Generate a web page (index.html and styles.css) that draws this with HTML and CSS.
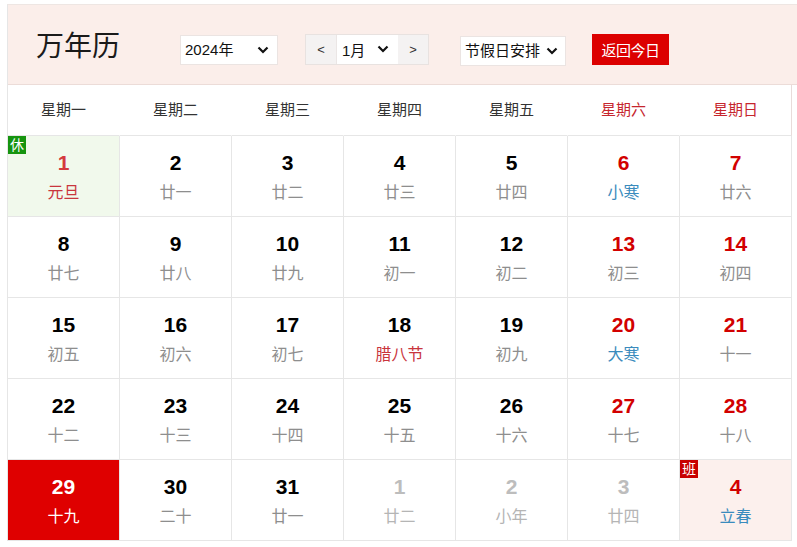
FILE: index.html
```html
<!DOCTYPE html>
<html lang="zh-CN">
<head>
<meta charset="utf-8">
<title>万年历</title>
<link rel="stylesheet" href="styles.css">
</head>
<body>
<div class="wrap">
  <div class="head">
    <h1 class="title">万年历</h1>
    <div class="controls">
      <div class="sel year"><span>2024年</span><svg class="chev" width="12" height="8" viewBox="0 0 12 8"><polyline points="1.5,1.5 6,6 10.5,1.5" fill="none" stroke="#111" stroke-width="2.2"/></svg></div>
      <div class="mgroup">
        <span class="arrow">&lt;</span>
        <div class="msel"><span>1月</span><svg class="chev" width="12" height="8" viewBox="0 0 12 8"><polyline points="1.5,1.5 6,6 10.5,1.5" fill="none" stroke="#111" stroke-width="2.2"/></svg></div>
        <span class="arrow">&gt;</span>
      </div>
      <div class="sel hol"><span>节假日安排</span><svg class="chev" width="12" height="8" viewBox="0 0 12 8"><polyline points="1.5,1.5 6,6 10.5,1.5" fill="none" stroke="#111" stroke-width="2.2"/></svg></div>
      <button class="today-btn">返回今日</button>
    </div>
  </div>
  <div class="grid">
    <div class="wd">星期一</div>
    <div class="wd">星期二</div>
    <div class="wd">星期三</div>
    <div class="wd">星期四</div>
    <div class="wd">星期五</div>
    <div class="wd we">星期六</div>
    <div class="wd we">星期日</div>

    <div class="day rest"><span class="badge xiu">休</span><b class="num hd">1</b><span class="lunar fest">元旦</span></div>
    <div class="day"><b class="num">2</b><span class="lunar">廿一</span></div>
    <div class="day"><b class="num">3</b><span class="lunar">廿二</span></div>
    <div class="day"><b class="num">4</b><span class="lunar">廿三</span></div>
    <div class="day"><b class="num">5</b><span class="lunar">廿四</span></div>
    <div class="day"><b class="num red">6</b><span class="lunar term">小寒</span></div>
    <div class="day"><b class="num red">7</b><span class="lunar">廿六</span></div>

    <div class="day"><b class="num">8</b><span class="lunar">廿七</span></div>
    <div class="day"><b class="num">9</b><span class="lunar">廿八</span></div>
    <div class="day"><b class="num">10</b><span class="lunar">廿九</span></div>
    <div class="day"><b class="num">11</b><span class="lunar">初一</span></div>
    <div class="day"><b class="num">12</b><span class="lunar">初二</span></div>
    <div class="day"><b class="num red">13</b><span class="lunar">初三</span></div>
    <div class="day"><b class="num red">14</b><span class="lunar">初四</span></div>

    <div class="day"><b class="num">15</b><span class="lunar">初五</span></div>
    <div class="day"><b class="num">16</b><span class="lunar">初六</span></div>
    <div class="day"><b class="num">17</b><span class="lunar">初七</span></div>
    <div class="day"><b class="num">18</b><span class="lunar fest">腊八节</span></div>
    <div class="day"><b class="num">19</b><span class="lunar">初九</span></div>
    <div class="day"><b class="num red">20</b><span class="lunar term">大寒</span></div>
    <div class="day"><b class="num red">21</b><span class="lunar">十一</span></div>

    <div class="day"><b class="num">22</b><span class="lunar">十二</span></div>
    <div class="day"><b class="num">23</b><span class="lunar">十三</span></div>
    <div class="day"><b class="num">24</b><span class="lunar">十四</span></div>
    <div class="day"><b class="num">25</b><span class="lunar">十五</span></div>
    <div class="day"><b class="num">26</b><span class="lunar">十六</span></div>
    <div class="day"><b class="num red">27</b><span class="lunar">十七</span></div>
    <div class="day"><b class="num red">28</b><span class="lunar">十八</span></div>

    <div class="day today"><b class="num">29</b><span class="lunar">十九</span></div>
    <div class="day"><b class="num">30</b><span class="lunar">二十</span></div>
    <div class="day"><b class="num">31</b><span class="lunar">廿一</span></div>
    <div class="day other"><b class="num">1</b><span class="lunar">廿二</span></div>
    <div class="day other"><b class="num">2</b><span class="lunar">小年</span></div>
    <div class="day other"><b class="num">3</b><span class="lunar">廿四</span></div>
    <div class="day work"><span class="badge ban">班</span><b class="num red">4</b><span class="lunar term">立春</span></div>
  </div>
</div>
</body>
</html>
```

FILE: styles.css
```css
html, body {
  margin: 0;
  padding: 0;
  background: #fff;
  overflow: hidden;
}
body {
  font-family: "Liberation Sans", "Noto Sans CJK SC", sans-serif;
  color: #222;
}
.wrap {
  margin: 4px 0 0 7px;
  border-top: 1px solid #eee6e3;
  border-left: 1px solid #e6e6e6;
}
.head {
  height: 80px;
  background: #fbeeea;
  border-bottom: 1px solid #ecdcd8;
  box-sizing: border-box;
  display: flex;
  align-items: center;
  padding-left: 28px;
}
.title {
  margin: 0 60px 0 0;
  font-family: "Noto Sans CJK SC", sans-serif;
  font-size: 28px;
  font-weight: normal;
  color: #1a1a1a;
  line-height: 1;
  position: relative;
  top: -1px;
}
.controls {
  display: flex;
  align-items: center;
  margin-top: 10px;
}
.sel {
  background: #fff;
  border: 1px solid #ebe4e2;
  height: 30px;
  box-sizing: border-box;
  display: flex;
  align-items: center;
  justify-content: space-between;
  font-size: 15px;
  color: #111;
}
.sel span { line-height: 1; }
.year {
  width: 98px;
  padding: 0 8px 0 4px;
  margin-right: 27px;
}
.mgroup {
  display: flex;
  height: 31px;
  border: 1px solid #e8e2e0;
  box-sizing: border-box;
  margin-right: 31px;
  margin-top: -1px;
}
.arrow {
  width: 30px;
  background: #f4f2f2;
  display: flex;
  align-items: center;
  justify-content: center;
  font-size: 13px;
  color: #333;
}
.msel {
  width: 62px;
  background: #fff;
  border-left: 1px solid #ebe6e5;
  box-sizing: border-box;
  display: flex;
  align-items: center;
  justify-content: space-between;
  padding: 0 9px 0 5px;
  font-size: 15px;
  color: #111;
}
.hol {
  width: 106px;
  padding: 0 7px 0 4px;
  font-size: 15px;
  margin-right: 26px;
  margin-top: 2px;
}
.chev { display: block; }
.today-btn {
  width: 77px;
  height: 31px;
  background: #dc0000;
  border: none;
  color: #fff;
  font-family: "Noto Sans CJK SC", sans-serif;
  font-size: 15px;
  padding: 0;
  margin-top: -1px;
  letter-spacing: -0.5px;
}
.grid {
  display: grid;
  grid-template-columns: repeat(7, 112px);
  width: 784px;
}
.wd {
  height: 51px;
  border-right: 1px solid transparent;
  border-bottom: 1px solid #e6e6e6;
  box-sizing: border-box;
  display: flex;
  align-items: center;
  justify-content: center;
  padding-bottom: 4px;
  font-size: 15px;
  color: #333;
}
.wd:nth-child(7) { border-right-color: #e8dcda; }
.wd.we { color: #c6262e; }
.day {
  position: relative;
  height: 81px;
  border-right: 1px solid #e6e6e6;
  border-bottom: 1px solid #e6e6e6;
  box-sizing: border-box;
  display: flex;
  flex-direction: column;
  align-items: center;
  padding-top: 15px;
}
.num {
  font-weight: bold;
  font-size: 21px;
  line-height: 24px;
  color: #000;
}
.num.red { color: #d20000; }
.num.hd { color: #d43a3e; }
.lunar {
  font-size: 16px;
  line-height: 20px;
  margin-top: 8px;
  color: #8e8e8e;
}
.lunar.fest { color: #c9353d; }
.lunar.term { color: #3a8bbd; }
.rest { background: #f1f9ec; }
.work { background: #fcf0ed; }
.today { background: #df0000; }
.today .num, .today .lunar { color: #fff; }
.other .num { color: #bdbdbd; }
.other .lunar { color: #b5b5b5; }
.badge {
  position: absolute;
  left: 0;
  top: 0;
  width: 18px;
  height: 18px;
  font-size: 14px;
  line-height: 18px;
  text-align: center;
  color: #fff;
}
.xiu { background: #16940f; }
.ban { background: #c80000; }
```
